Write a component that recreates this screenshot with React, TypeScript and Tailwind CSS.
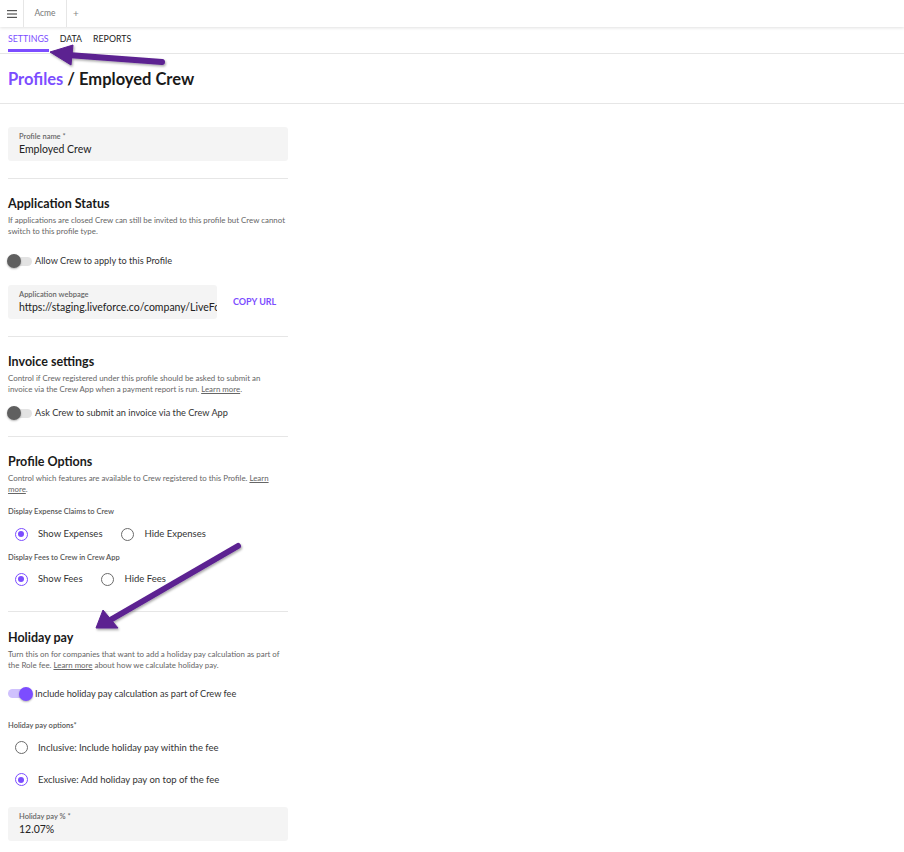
import React from "react";

function Toggle({ on }: { on?: boolean }) {
  return (
    <div className="relative w-[26px] h-[14px] flex items-center shrink-0">
      <div className={`w-[24px] h-[9px] rounded-full ml-[1px] ${on ? "bg-[#cfc1fd]" : "bg-[#e3e3e3]"}`} />
      <div
        className={`absolute top-0 w-[14px] h-[14px] rounded-full shadow-[0_1px_2px_rgba(0,0,0,0.3)] ${
          on ? "left-[12px] bg-[#7c4dff]" : "left-0 bg-[#5f5f5f]"
        }`}
      />
    </div>
  );
}

function Radio({ checked, label }: { checked?: boolean; label: string }) {
  return (
    <div className="flex items-center">
      <div className="w-[26px] flex justify-center">
        <div
          className={`w-[13px] h-[13px] rounded-full border-[1.5px] flex items-center justify-center ${
            checked ? "border-[#7c4dff]" : "border-[#6b6b6b]"
          }`}
        >
          {checked && <div className="w-[6px] h-[6px] rounded-full bg-[#7c4dff]" />}
        </div>
      </div>
      <span className="text-[9.5px] text-[#333] ml-[4px]">{label}</span>
    </div>
  );
}

function Field({ label, value, w }: { label: string; value: string; w: string }) {
  return (
    <div className={`${w} bg-[#f4f4f4] rounded-[3px] pl-[11px] pt-[5px] h-[34px] overflow-hidden`}>
      <div className="text-[7.5px] font-semibold text-[#666] leading-[10px]">{label}</div>
      <div className="text-[10.5px] text-[#222] leading-[14px] whitespace-nowrap overflow-hidden">{value}</div>
    </div>
  );
}

function H({ children }: { children: React.ReactNode }) {
  return <div className="text-[12.5px] font-bold text-[#1a1a1a] leading-[16px]">{children}</div>;
}

function Desc({ children }: { children: React.ReactNode }) {
  return <div className="w-[282px] text-[7.9px] text-[#666] leading-[11px] mt-[3px]">{children}</div>;
}

function Divider() {
  return <div className="h-px bg-[#e6e6e6] w-[280px]" />;
}

export default function App() {
  return (
    <div className="relative w-[904px] h-[852px] bg-white overflow-hidden" style={{ fontFamily: "Lato, 'Noto Sans', sans-serif" }}>
      {/* top bar */}
      <div className="h-[27px] flex items-stretch shadow-[0_1px_3px_rgba(0,0,0,0.12)] relative z-10 bg-white">
        <div className="w-[24px] flex items-center justify-center border-r border-[#e6e6e6]">
          <svg width="10" height="8" viewBox="0 0 10 8">
            <rect x="0" y="0" width="10" height="1.2" fill="#555" />
            <rect x="0" y="3.4" width="10" height="1.2" fill="#555" />
            <rect x="0" y="6.8" width="10" height="1.2" fill="#555" />
          </svg>
        </div>
        <div className="w-[43px] flex items-center justify-center border-r border-[#e6e6e6] text-[8.5px] text-[#777]">Acme</div>
        <div className="w-[18px] flex items-center justify-center text-[10px] text-[#888]">+</div>
      </div>
      {/* tabs */}
      <div className="h-[27px] flex items-stretch border-b border-[#e6e6e6] pl-[8px] gap-[11px]">
        <div className="relative flex items-center text-[8.8px] text-[#7c4dff] pb-[3px]">
          SETTINGS
          <div className="absolute left-0 right-0 bottom-[1px] h-[3px] bg-[#7c4dff]" />
        </div>
        <div className="flex items-center text-[8.8px] text-[#222] pb-[3px]">DATA</div>
        <div className="flex items-center text-[8.8px] text-[#222] pb-[3px]">REPORTS</div>
      </div>
      {/* title */}
      <div className="h-[50px] border-b border-[#e6e6e6] pl-[8px] flex items-center pt-[1px]">
        <span className="text-[16.5px] font-bold text-[#7c4dff]">Profiles</span>
        <span className="text-[16.5px] font-bold text-[#1a1a1a] ml-[4px]">/ Employed Crew</span>
      </div>

      <div className="pl-[8px] pt-[23px] flex flex-col">
        <Field label="Profile name *" value="Employed Crew" w="w-[280px]" />
        <div className="mt-[17px]"><Divider /></div>

        <div className="mt-[17px]">
          <H>Application Status</H>
          <Desc>
            If applications are closed Crew can still be invited to this profile but Crew cannot switch to this profile type.
          </Desc>
        </div>
        <div className="mt-[17px] flex items-center gap-[2px] -ml-[1px]">
          <Toggle />
          <span className="text-[9.2px] text-[#333]">Allow Crew to apply to this Profile</span>
        </div>
        <div className="mt-[17px] flex items-center">
          <Field label="Application webpage" value="https://staging.liveforce.co/company/LiveForce" w="w-[209px]" />
          <span className="ml-[16px] text-[9px] font-bold text-[#7c4dff]">COPY URL</span>
        </div>
        <div className="mt-[17px]"><Divider /></div>

        <div className="mt-[17px]">
          <H>Invoice settings</H>
          <Desc>
            Control if Crew registered under this profile should be asked to submit an
            <br />
            invoice via the Crew App when a payment report is run. <span className="underline">Learn more</span>.
          </Desc>
        </div>
        <div className="mt-[11px] flex items-center gap-[2px] -ml-[1px]">
          <Toggle />
          <span className="text-[9.2px] text-[#333]">Ask Crew to submit an invoice via the Crew App</span>
        </div>
        <div className="mt-[16px]"><Divider /></div>

        <div className="mt-[17px]">
          <H>Profile Options</H>
          <Desc>
            Control which features are available to Crew registered to this Profile. <span className="underline">Learn more</span>.
          </Desc>
        </div>
        <div className="mt-[12px] text-[7.5px] font-semibold text-[#555] leading-[10px]">Display Expense Claims to Crew</div>
        <div className="mt-[10px] flex items-center gap-[12px]">
          <Radio checked label="Show Expenses" />
          <Radio label="Hide Expenses" />
        </div>
        <div className="mt-[12px] text-[7.5px] font-semibold text-[#555] leading-[10px]">Display Fees to Crew in Crew App</div>
        <div className="mt-[9px] flex items-center gap-[12px]">
          <Radio checked label="Show Fees" />
          <Radio label="Hide Fees" />
        </div>
        <div className="mt-[24px]"><Divider /></div>

        <div className="mt-[18px]">
          <H>Holiday pay</H>
          <Desc>
            Turn this on for companies that want to add a holiday pay calculation as part of the Role fee. <span className="underline">Learn more</span> about how we calculate holiday pay.
          </Desc>
        </div>
        <div className="mt-[16px] flex items-center gap-[2px] -ml-[1px]">
          <Toggle on />
          <span className="text-[9.2px] text-[#333]">Include holiday pay calculation as part of Crew fee</span>
        </div>
        <div className="mt-[20px] text-[7.5px] font-semibold text-[#555] leading-[10px]">Holiday pay options*</div>
        <div className="mt-[10px]">
          <Radio label="Inclusive: Include holiday pay within the fee" />
        </div>
        <div className="mt-[18px]">
          <Radio checked label="Exclusive: Add holiday pay on top of the fee" />
        </div>
        <div className="mt-[20px]">
          <Field label="Holiday pay % *" value="12.07%" w="w-[280px]" />
        </div>
      </div>

      {/* annotation arrows */}
      <svg className="absolute inset-0 pointer-events-none z-20" width="904" height="852" viewBox="0 0 904 852">
        <defs>
          <filter id="sh" x="-20%" y="-20%" width="140%" height="140%">
            <feDropShadow dx="1" dy="1.5" stdDeviation="1.2" floodColor="#000" floodOpacity="0.35" />
          </filter>
        </defs>
        <g filter="url(#sh)" fill="#5b2091" stroke="#5b2091">
          <line x1="162" y1="62" x2="68" y2="55" strokeWidth="6" strokeLinecap="round" />
          <polygon points="50,52 73,45 71,65" strokeWidth="1" strokeLinejoin="round" />
          <line x1="238" y1="546" x2="112" y2="619" strokeWidth="6" strokeLinecap="round" />
          <polygon points="96,628 103,610 118,628" strokeWidth="1" strokeLinejoin="round" />
        </g>
      </svg>
    </div>
  );
}
